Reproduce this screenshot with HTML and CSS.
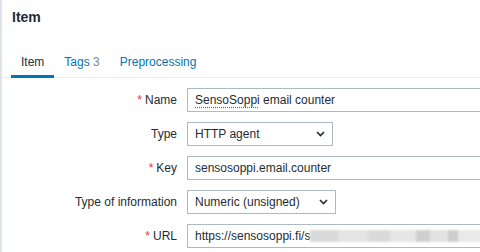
FILE: index.html
```html
<!DOCTYPE html>
<html>
<head>
<meta charset="utf-8">
<link rel="stylesheet" href="styles.css">
</head>
<body>
<div class="dialog">
  <div class="header"><h4 class="title">Item</h4></div>
  <div class="tabs">
    <span class="tab active">Item</span>
    <span class="tab">Tags <span class="count">3</span></span>
    <span class="tab">Preprocessing</span>
  </div>
  <div class="form">
    <label class="label"><span class="req">*</span> Name</label>
    <div class="field"><div class="input wide"><span class="spell">SensoSoppi</span> email counter</div></div>

    <label class="label">Type</label>
    <div class="field"><div class="input select type">HTTP agent<svg class="chev" width="9" height="6" viewBox="0 0 9 6"><polyline points="1,1 4.5,4.5 8,1" fill="none" stroke="#1f2c33" stroke-width="1.6"/></svg></div></div>

    <label class="label"><span class="req">*</span> Key</label>
    <div class="field"><div class="input wide">sensosoppi.email.counter</div></div>

    <label class="label">Type of information</label>
    <div class="field"><div class="input select info">Numeric (unsigned)<svg class="chev" width="9" height="6" viewBox="0 0 9 6"><polyline points="1,1 4.5,4.5 8,1" fill="none" stroke="#1f2c33" stroke-width="1.6"/></svg></div></div>

    <label class="label"><span class="req">*</span> URL</label>
    <div class="field"><div class="input wide url">https://sensosoppi.fi/s<span class="blur"><i class="b1"></i><i class="b2"></i><i class="b3"></i><i class="b4"></i><i class="b5"></i><i class="b6"></i><i class="b7"></i><i class="b8"></i></span></div></div>
  </div>
</div>
</body>
</html>
```
FILE: styles.css
```css
* { box-sizing: border-box; }
html, body { margin: 0; padding: 0; background: #fff; overflow: hidden; }
body {
  width: 480px; height: 252px;
  font-family: "Liberation Sans", Arial, sans-serif;
  font-size: 12px;
  color: #1f2c33;
}
.dialog {
  border-left: 2px solid #dde3e7;
  height: 252px;
  overflow: hidden;
}
.header { padding: 8px 0 0 10px; height: 53px; }
.title { margin: 0; font-size: 14px; line-height: 18px; font-weight: bold; color: #1f2c33; }
.tabs {
  display: flex;
  padding-left: 9px;
  border-bottom: 1px solid #ebeef0;
  height: 25px;
}
.tab {
  padding: 0 10px 4px;
  line-height: 18px;
  color: #0275b8;
  border-bottom: 3px solid transparent;
  margin-bottom: -1px;
  height: 25px;
  white-space: nowrap;
}
.tab.active { color: #1f2c33; border-bottom-color: #0275b8; }
.count { color: #768d99; }
.form {
  display: grid;
  grid-template-columns: 175px auto;
  column-gap: 10px;
  row-gap: 10px;
  padding-top: 10px;
}
.label {
  display: flex; align-items: center; justify-content: flex-end;
  height: 24px; white-space: nowrap;
}
.req { color: #e33734; margin-right: 3px; font-size: 12px; }
.field { display: flex; }
.input {
  position: relative;
  height: 24px;
  border: 1px solid #acbbc2;
  padding: 0 7px;
  line-height: 22px;
  white-space: nowrap;
  background: #fff;
  overflow: hidden;
}
.wide { width: 420px; }
.type { width: 146px; }
.info { width: 149px; }
.spell { text-decoration: underline dotted #e33734; text-underline-offset: 3px; }
.chev { position: absolute; right: 7px; top: 8px; }
.url { display: flex; align-items: center; }
.blur { display: inline-flex; height: 12px; filter: blur(1.2px); }
.blur i { display: block; height: 12px; }
.b1 { width: 28px; background: #d9d9d9; }
.b2 { width: 30px; background: #e4e4e4; }
.b3 { width: 22px; background: #dadada; }
.b4 { width: 26px; background: #e6e6e6; }
.b5 { width: 14px; background: #cfcfcf; }
.b6 { width: 18px; background: #e2e2e2; }
.b7 { width: 10px; background: #cdcdcd; }
.b8 { width: 24px; background: #e9e9e9; }
```
